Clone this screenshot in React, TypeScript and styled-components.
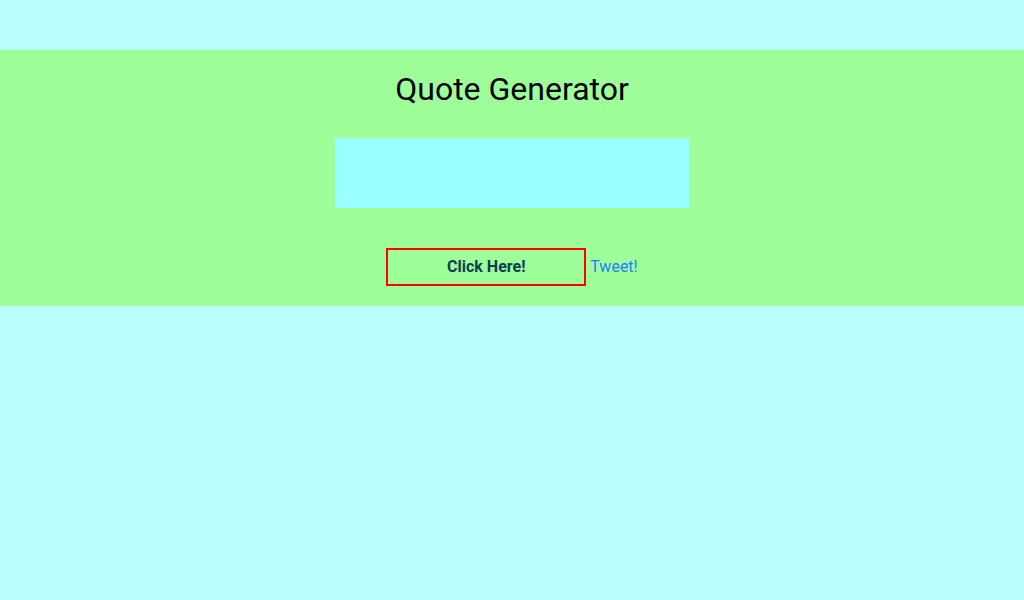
import React from "react";
import styled, { createGlobalStyle } from "styled-components";

const GlobalStyle = createGlobalStyle`
  html, body {
    margin: 0;
    padding: 0;
    background: #bbffff;
    font-family: Roboto, "Liberation Sans", sans-serif;
  }
`;

const Page = styled.div`
  padding-top: 50px;
`;

const Band = styled.section`
  background: #9eff9a;
  display: flex;
  flex-direction: column;
  align-items: center;
  padding: 0 0 20px;
`;

const Title = styled.h1`
  margin: 0;
  padding-top: 20px;
  font-size: 32px;
  line-height: 38px;
  font-weight: 400;
  color: #000;
`;

const QuoteBox = styled.div`
  margin-top: 30px;
  width: 354px;
  height: 70px;
  background: #99ffff;
`;

const Actions = styled.div`
  margin-top: 40px;
  display: flex;
  align-items: center;
  gap: 4px;
`;

const Button = styled.button`
  width: 200px;
  height: 38px;
  box-sizing: border-box;
  border: 2px solid #ff0000;
  background: transparent;
  padding: 0 0 1px;
  font-family: Roboto, "Liberation Sans", sans-serif;
  font-size: 16px;
  font-weight: 700;
  color: #0d3c50;
  cursor: pointer;
`;

const TweetLink = styled.a`
  font-size: 16px;
  line-height: 18px;
  color: #1b80ff;
  text-decoration: none;
`;

export default function App() {
  return (
    <>
      <GlobalStyle />
      <Page>
        <Band>
          <Title>Quote Generator</Title>
          <QuoteBox />
          <Actions>
            <Button>Click Here!</Button>
            <TweetLink href="#">Tweet!</TweetLink>
          </Actions>
        </Band>
      </Page>
    </>
  );
}
